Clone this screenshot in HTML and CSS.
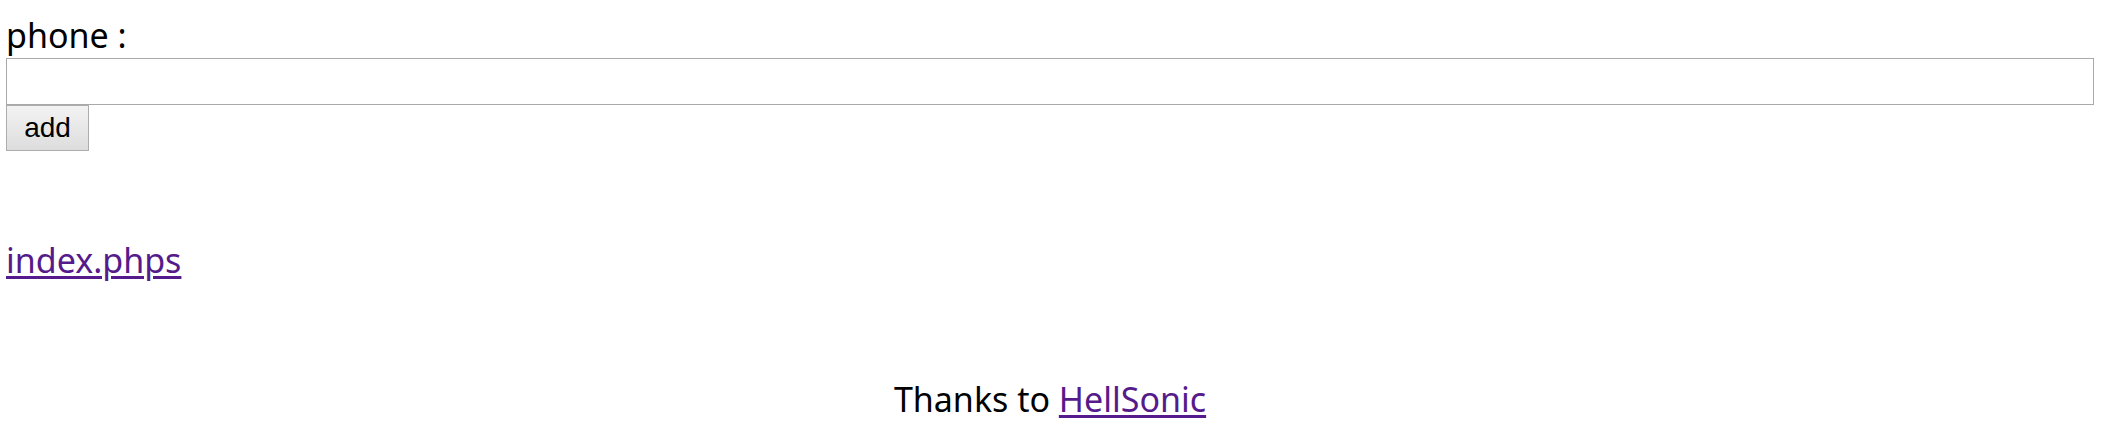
FILE: index.html
```html
<!DOCTYPE html>
<html>
<head>
<meta charset="utf-8">
<link rel="stylesheet" href="styles.css">
</head>
<body>
<form class="form">
  <label class="label">phone :</label>
  <input class="field" type="text">
  <button class="btn" type="button">add</button>
</form>
<div class="source"><a class="link" href="#">index.phps</a></div>
<div class="thanks">Thanks to <a class="link" href="#">HellSonic</a></div>
</body>
</html>
```

FILE: styles.css
```css
html, body {
  margin: 0;
  padding: 0;
  background: #fff;
}
body {
  padding: 18px 10px 0 6px;
  font-family: "Noto Sans", "Open Sans", sans-serif;
  font-size: 34px;
  color: #000;
}
.form {
  display: flex;
  flex-direction: column;
  align-items: flex-start;
  margin: 0;
}
.label {
  line-height: 46px;
  height: 46px;
  margin-top: -6px;
}
.field {
  box-sizing: border-box;
  width: 100%;
  height: 47px;
  margin: 0;
  border: 1px solid #a9a9a9;
  background: #fff;
  padding: 0 4px;
}
.btn {
  box-sizing: border-box;
  width: 83px;
  height: 46px;
  margin: 0;
  padding: 0;
  border: 1px solid #adadad;
  border-radius: 0;
  background: linear-gradient(#f3f3f3, #dddddd);
  font-family: "Liberation Sans", Arial, sans-serif;
  font-size: 28px;
  color: #000;
}
.source {
  margin-top: 86px;
  line-height: 46px;
}
.link {
  color: #551a8b;
  text-decoration: underline;
  text-decoration-thickness: 3px;
  text-underline-offset: 3px;
}
.thanks {
  margin-top: 93px;
  text-align: center;
  line-height: 46px;
}
```
